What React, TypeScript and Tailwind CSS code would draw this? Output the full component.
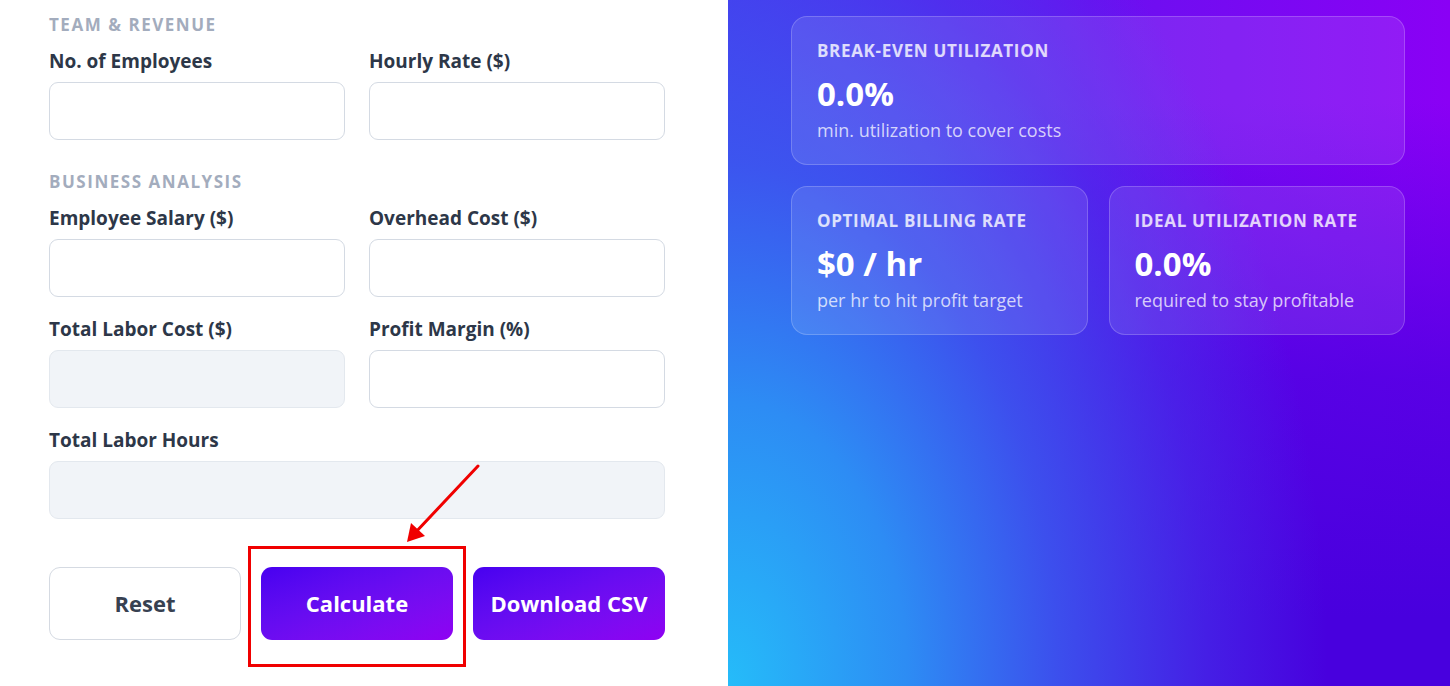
import React from "react";

const font = { fontFamily: "'Open Sans', 'Noto Sans', sans-serif" };

function Field({ label, readOnly = false, full = false }: { label: string; readOnly?: boolean; full?: boolean }) {
  return (
    <div className={full ? "col-span-2 flex flex-col" : "flex flex-col"}>
      <label className="text-[19px] leading-[24px] font-bold text-[#2d3748]">{label}</label>
      <input
        readOnly={readOnly}
        className={
          "mt-[9px] h-[58px] w-full rounded-[9px] border outline-none " +
          (readOnly ? "bg-[#f1f4f8] border-[#e3e8ee]" : "bg-white border-[#d4dae3]")
        }
      />
    </div>
  );
}

function Section({ title }: { title: string }) {
  return (
    <div className="text-[17px] leading-[20px] font-bold tracking-[0.09em] text-[#a3acbd] uppercase">{title}</div>
  );
}

function Card({ title, value, sub }: { title: string; value: string; sub: string }) {
  return (
    <div className="rounded-[16px] border border-white/20 bg-white/10 px-[25px] pt-[24px] pb-[22px]">
      <div className="text-[17px] leading-[20px] font-bold tracking-[0.04em] text-white/80 uppercase">{title}</div>
      <div className="mt-[13px] text-[33px] leading-[40px] font-bold text-white">{value}</div>
      <div className="mt-[4px] text-[18px] leading-[24px] text-white/75">{sub}</div>
    </div>
  );
}

export default function App() {
  return (
    <div className="relative flex h-[686px] w-full overflow-hidden" style={font}>
      <div className="w-[728px] shrink-0 bg-white pl-[49px] pr-[63px] pt-[15px]">
        <Section title="Team & Revenue" />
        <div className="mt-[14px] grid grid-cols-2 gap-x-[24px] gap-y-[20px]">
          <Field label="No. of Employees" />
          <Field label="Hourly Rate ($)" />
        </div>
        <div className="mt-[32px]">
          <Section title="Business Analysis" />
        </div>
        <div className="mt-[14px] grid grid-cols-2 gap-x-[24px] gap-y-[20px]">
          <Field label="Employee Salary ($)" />
          <Field label="Overhead Cost ($)" />
          <Field label="Total Labor Cost ($)" readOnly />
          <Field label="Profit Margin (%)" />
          <Field label="Total Labor Hours" readOnly full />
        </div>
        <div className="mt-[48px] grid grid-cols-3 gap-[20px]">
          <button className="h-[73px] rounded-[11px] border-[1.5px] border-[#d5dae2] bg-white text-[22px] font-bold text-[#374151]">
            Reset
          </button>
          <button className="h-[73px] rounded-[11px] bg-linear-to-br from-[#4700f0] to-[#8f00f2] text-[22px] font-bold text-white">
            Calculate
          </button>
          <button className="h-[73px] rounded-[11px] bg-linear-to-br from-[#4700f0] to-[#8f00f2] text-[22px] font-bold text-white">
            Download CSV
          </button>
        </div>
      </div>
      <div className="flex-1 pl-[63px] pr-[45px] pt-[16px] bg-[radial-gradient(ellipse_600px_950px_at_0%_100%,#25bcf9_0%,rgba(45,140,244,1)_30%,rgba(58,90,239,0.88)_55%,rgba(66,60,236,0.5)_80%,rgba(70,50,235,0)_100%),linear-gradient(to_bottom,rgba(74,0,224,0)_15%,rgba(74,0,224,0.75)_55%,rgba(72,0,222,1)_90%),linear-gradient(to_right,#4a3af0_0%,#6a10f0_50%,#8a00f5_100%)]">
        <Card title="Break-even Utilization" value="0.0%" sub="min. utilization to cover costs" />
        <div className="mt-[21px] grid grid-cols-2 gap-[21px]">
          <Card title="Optimal Billing Rate" value="$0 / hr" sub="per hr to hit profit target" />
          <Card title="Ideal Utilization Rate" value="0.0%" sub="required to stay profitable" />
        </div>
      </div>

      {/* annotation overlay */}
      <div className="pointer-events-none absolute left-[248px] top-[546px] h-[121px] w-[218px] border-[3px] border-[#f00000]" />
      <svg className="pointer-events-none absolute left-0 top-0" width="1450" height="686">
        <line x1="478" y1="466" x2="414" y2="534" stroke="#f00000" strokeWidth="3" strokeLinecap="round" />
        <polygon points="407,542 411,523 425,536" fill="#f00000" />
      </svg>
    </div>
  );
}
